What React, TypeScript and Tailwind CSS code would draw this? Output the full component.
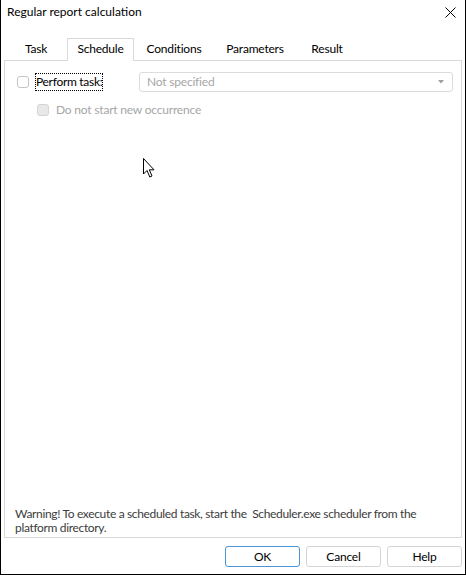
import React from "react";

function Cursor() {
  return (
    <svg
      className="absolute left-[141px] top-[157px]"
      width="14"
      height="22"
      viewBox="0 0 14 22"
    >
      <path
        d="M1.5 1.5 L1.5 17 L5 13.5 L7.8 20 L10 19 L7.3 12.8 L12 12.8 Z"
        fill="#ffffff"
        stroke="#000000"
        strokeWidth="1"
        strokeLinejoin="miter"
      />
    </svg>
  );
}

export default function App() {
  const font = "font-['Lato','Liberation_Sans',Arial,sans-serif]";
  return (
    <div
      className={`relative w-[466px] h-[575px] bg-white border-l border-r border-b border-black flex flex-col text-[12px] tracking-[-0.2px] text-[#1a1a1a] ${font}`}
    >
      {/* Title bar */}
      <div className="h-[24px] flex items-center justify-between pl-[6px] pr-[8px]">
        <span className="text-[12px] text-black whitespace-nowrap tracking-[0px]">Regular report calculation</span>
        <svg width="11" height="11" viewBox="0 0 11 11" className="mr-[1px]">
          <path d="M0.5 0.5 L10.5 10.5 M10.5 0.5 L0.5 10.5" stroke="#000" strokeWidth="1" />
        </svg>
      </div>

      {/* Tabs */}
      <div className="mt-[14px] h-[22px] flex items-end pl-[4px] relative z-10 whitespace-nowrap">
        <div className="w-[62px] h-[21px] pb-[2px] flex items-center justify-center text-black">Task</div>
        <div className="w-[67px] h-[23px] pb-[2px] -mb-[1px] bg-white border border-b-0 border-[#d9d9d9] flex items-center justify-center text-black">
          Schedule
        </div>
        <div className="w-[80px] h-[21px] pb-[2px] flex items-center justify-center text-black">Conditions</div>
        <div className="w-[82px] h-[21px] pb-[2px] flex items-center justify-center text-black">Parameters</div>
        <div className="w-[62px] h-[21px] pb-[2px] flex items-center justify-center text-black">Result</div>
      </div>

      {/* Panel */}
      <div className="mx-[3px] h-[478px] border border-[#d9d9d9] flex flex-col">
        <div className="flex items-center mt-[11px] h-[20px] whitespace-nowrap">
          <div className="ml-[12px] w-[12px] h-[12px] rounded-[3px] border border-[#c4c4c4] bg-white" />
          <div className="ml-[6px] w-[68px] h-[18px] flex items-center border border-dotted border-black text-black tracking-[-0.3px]">
            Perform task:
          </div>
          <div className="ml-[36px] w-[314px] h-[20px] rounded-[3px] border border-[#dcdcdc] flex items-center justify-between pl-[7px] pr-[8px] text-[#a6a6a6]">
            <span>Not specified</span>
            <svg width="6" height="4" viewBox="0 0 6 4">
              <path d="M0 0 L6 0 L3 3.5 Z" fill="#a0a0a0" />
            </svg>
          </div>
        </div>
        <div className="flex items-center mt-[11px] h-[14px] whitespace-nowrap">
          <div className="ml-[32px] w-[12px] h-[12px] rounded-[3px] border border-[#d4d4d4] bg-[#e8e8e8]" />
          <span className="ml-[7px] text-[#a6a6a6]">Do not start new occurrence</span>
        </div>
        <div className="flex-1" />
        <div className="pl-[10px] pb-[2px] text-[#3c3c3c] leading-[14px] whitespace-nowrap tracking-[-0.34px]">
          Warning! To execute a scheduled task, start the&nbsp; Scheduler.exe scheduler from the
          <br />
          platform directory.
        </div>
      </div>

      {/* Buttons */}
      <div className="flex-1 flex items-start justify-end gap-[6px] pr-[3px] pt-[8px]">
        <button className="w-[75px] h-[21px] rounded-[3px] border border-[#4a94d8] bg-white text-black">
          OK
        </button>
        <button className="w-[75px] h-[21px] rounded-[3px] border border-[#d4d4d4] bg-white text-black">
          Cancel
        </button>
        <button className="w-[75px] h-[21px] rounded-[3px] border border-[#d4d4d4] bg-white text-black">
          Help
        </button>
      </div>

      <Cursor />
    </div>
  );
}
